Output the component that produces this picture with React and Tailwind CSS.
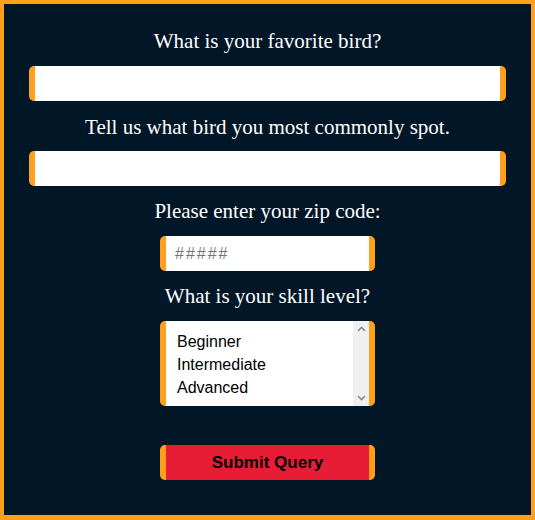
export default function App() {
  const label = "text-[21px] leading-[23px] text-white text-center";
  return (
    <div className="w-[535px] h-[520px] box-border border-[4px] border-b-[5px] border-[#ff9f1c] bg-[#011627] flex flex-col items-center pt-[26px]" style={{ fontFamily: '"Liberation Serif", "Times New Roman", serif' }}>
      <div className={label}>What is your favorite bird?</div>
      <div className="mt-[13px] w-[477px] h-[35px] bg-white rounded-[5px] border-x-[6px] border-[#ff9f1c]"></div>
      <div className={label + " mt-[15px]"}>Tell us what bird you most commonly spot.</div>
      <div className="mt-[12px] w-[477px] h-[35px] bg-white rounded-[5px] border-x-[6px] border-[#ff9f1c]"></div>
      <div className={label + " mt-[14px]"}>Please enter your zip code:</div>
      <div className="mt-[13px] w-[215px] h-[35px] bg-white rounded-[5px] border-x-[6px] border-[#ff9f1c] flex items-center pl-[9px] text-[16px] tracking-[2px] text-[#757575]" style={{ fontFamily: '"Liberation Sans", Arial, sans-serif' }}>#####</div>
      <div className={label + " mt-[14px]"}>What is your skill level?</div>
      <div className="mt-[13px] w-[215px] h-[85px] bg-white rounded-[5px] border-x-[6px] border-[#ff9f1c] flex" style={{ fontFamily: '"Liberation Sans", Arial, sans-serif' }}>
        <div className="flex-1 pt-[9px] pl-[11px] text-[16px] leading-[23px] text-black">
          <div>Beginner</div>
          <div>Intermediate</div>
          <div>Advanced</div>
        </div>
        <div className="w-[16px] bg-[#f0f0f0] flex flex-col items-center justify-between py-[5px]">
          <svg width="9" height="6" viewBox="0 0 9 6"><path d="M1 5 L4.5 1.5 L8 5" fill="none" stroke="#8a8a8a" strokeWidth="1.6" /></svg>
          <svg width="9" height="6" viewBox="0 0 9 6"><path d="M1 1 L4.5 4.5 L8 1" fill="none" stroke="#8a8a8a" strokeWidth="1.6" /></svg>
        </div>
      </div>
      <div className="mt-[39px] w-[215px] h-[35px] bg-[#e71d36] rounded-[5px] border-x-[6px] border-[#ff9f1c] flex items-center justify-center pt-[1px] text-[17px] font-bold text-black" style={{ fontFamily: '"Liberation Sans", Arial, sans-serif' }}>Submit Query</div>
    </div>
  );
}
